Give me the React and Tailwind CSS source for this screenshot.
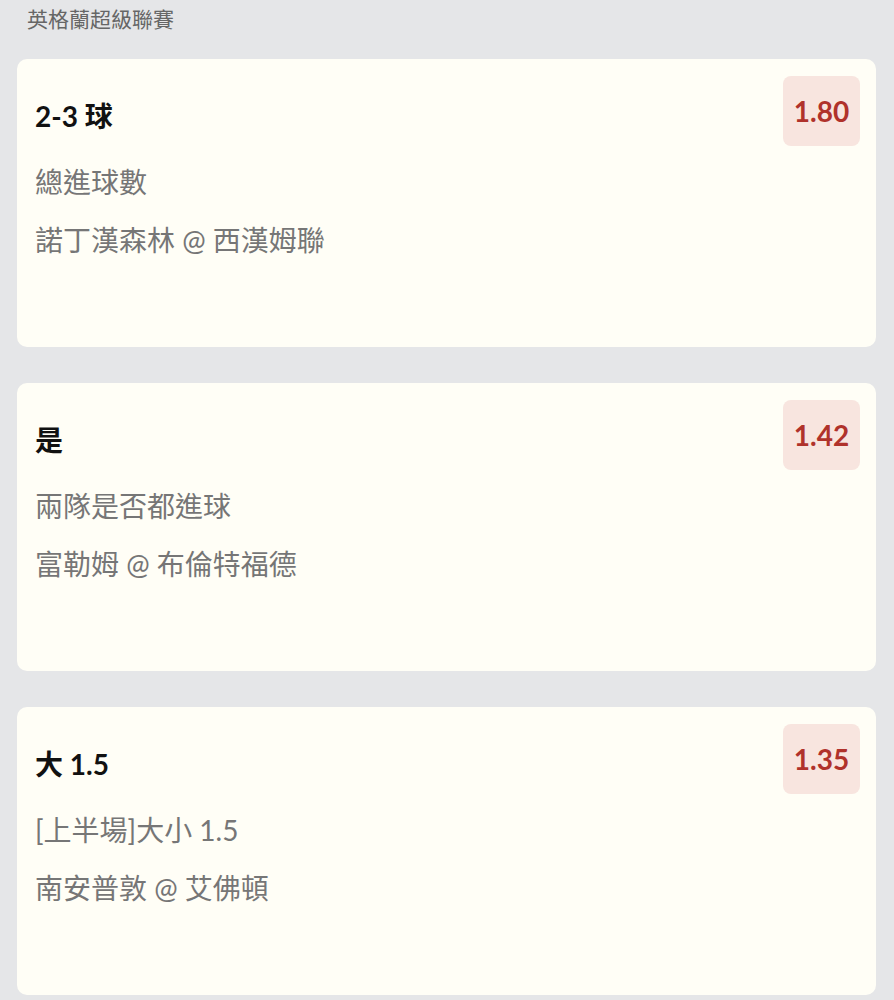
const bets = [
  { pick: "2-3 球", market: "總進球數", match: "諾丁漢森林 @ 西漢姆聯", odds: "1.80" },
  { pick: "是", market: "兩隊是否都進球", match: "富勒姆 @ 布倫特福德", odds: "1.42" },
  { pick: "大 1.5", market: "[上半場]大小 1.5", match: "南安普敦 @ 艾佛頓", odds: "1.35" },
];

function BetCard({ bet }) {
  return (
    <div className="flex h-[288px] items-start justify-between rounded-[10px] bg-[#fffef6] pl-[18px] pr-4 pt-[17px]">
      <div className="flex flex-col pt-[23px]">
        <div className="text-[28px] font-bold leading-[34px] text-[#111]">{bet.pick}</div>
        <div className="mt-[32px] text-[28px] leading-[34px] text-[#767676]">{bet.market}</div>
        <div className="mt-[24px] text-[28px] leading-[34px] text-[#767676]">{bet.match}</div>
      </div>
      <div className="flex h-[70px] w-[77px] items-center justify-center rounded-[8px] bg-[#f8e5df] text-[28px] font-bold text-[#b0322b]">
        {bet.odds}
      </div>
    </div>
  );
}

export default function App() {
  return (
    <div
      className="min-h-[1000px] bg-[#e5e6e8] px-[17px] pb-2"
      style={{ fontFamily: 'Lato, "Noto Sans CJK TC", sans-serif' }}
    >
      <div className="pl-[10px] pt-[5px] text-[21px] leading-[28px] text-[#666]">英格蘭超級聯賽</div>
      <div className="mt-[26px] flex flex-col gap-[36px] pr-px">
        {bets.map((b) => (
          <BetCard key={b.odds} bet={b} />
        ))}
      </div>
    </div>
  );
}
